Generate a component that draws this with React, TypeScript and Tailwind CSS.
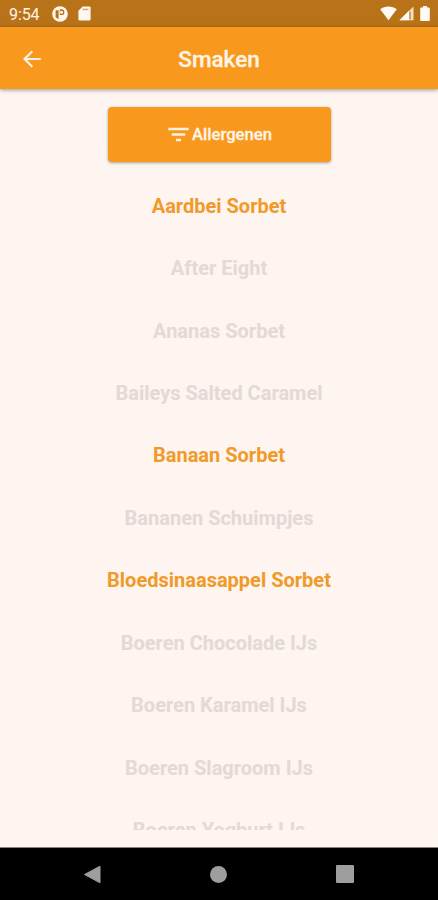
const flavours: { name: string; available: boolean }[] = [
  { name: 'Aardbei Sorbet', available: true },
  { name: 'After Eight', available: false },
  { name: 'Ananas Sorbet', available: false },
  { name: 'Baileys Salted Caramel', available: false },
  { name: 'Banaan Sorbet', available: true },
  { name: 'Bananen Schuimpjes', available: false },
  { name: 'Bloedsinaasappel Sorbet', available: true },
  { name: 'Boeren Chocolade IJs', available: false },
  { name: 'Boeren Karamel IJs', available: false },
  { name: 'Boeren Slagroom IJs', available: false },
  { name: 'Boeren Yoghurt IJs', available: false },
];

function StatusBar() {
  return (
    <div className="flex h-[27px] shrink-0 items-center bg-[#b87319] pl-[9px] pr-[8px] text-white">
      <span className="w-[31px] whitespace-nowrap pt-[2px] text-[16px] leading-[25px] tracking-[-0.1px] text-[#fff3e6]">9:54</span>
      <svg className="ml-[12px] h-4 w-4" viewBox="0 0 16 16">
        <circle cx="8" cy="8" r="7.8" fill="#fff8f0" />
        <path d="M3.600 4.200h3v8.900a5.500 5.500 0 0 1-3-2.200zM7.800 3.300h1.700a2.900 2.900 0 0 1 0 5.800H7.800z" fill="#b87319" />
        <circle cx="9.500" cy="6.200" r="1.500" fill="#fff8f0" />
      </svg>
      <svg className="ml-[10px] h-[15px] w-[13px]" viewBox="0 0 13 15">
        <path d="M4.700.5h6.600A1.300 1.300 0 0 1 12.600 1.800v11.400a1.300 1.300 0 0 1-1.300 1.300H1.700A1.300 1.300 0 0 1 .4 13.200V4.800z" fill="#fff8f0" />
        <path d="M4.500 3.400h6" stroke="#b87319" strokeOpacity="0.6" strokeWidth="1.500" />
      </svg>
      <svg className="ml-auto h-[15px] w-[17px]" viewBox="0 0 17 15">
        <path d="M.2 3.200C5-.5 12-.5 16.800 3.200L8.500 14.200z" fill="#fffaf4" />
      </svg>
      <svg className="ml-[2px] h-[15px] w-[15px]" viewBox="0 0 15 15">
        <path d="M14.500.5v13.700H.5z" fill="#f5dfc5" />
        <path d="M10 4.700v9.500H.5z" fill="#fffaf4" />
        <path d="M11 5.500v7.700" stroke="#b87319" strokeWidth="1.200" />
      </svg>
      <svg className="ml-[6px] h-[15px] w-[10px]" viewBox="0 0 10 15">
        <path d="M3 0h4v1.500h1.800a1 1 0 0 1 1 1V14a1 1 0 0 1-1 1H1.200a1 1 0 0 1-1-1V2.500a1 1 0 0 1 1-1H3z" fill="#fffaf4" />
      </svg>
    </div>
  );
}

function AppBar() {
  return (
    <header className="z-10 grid h-[62px] shrink-0 grid-cols-[64px_1fr_64px] items-center bg-[#f8991d] shadow-[0_1px_4px_rgba(0,0,0,0.4)]">
      <button aria-label="Terug" className="flex h-full items-center pl-[23px] pt-px">
        <svg className="h-[18px] w-[18px]" viewBox="0 0 18 18" fill="none" stroke="#fff0df" strokeWidth="2.200">
          <path d="M17.700 9H2M9.300 1.200 1.500 9l7.800 7.800" />
        </svg>
      </button>
      <h1 className="pt-[2px] text-center text-[22.500px] font-medium leading-7 text-[#fff3e6] [-webkit-text-stroke:0.3px_#fff3e6]">Smaken</h1>
    </header>
  );
}

function NavigationBar() {
  return (
    <nav className="flex h-[53px] shrink-0 items-center border-t border-[#85817e] bg-black pl-[83px] pr-[84px]">
      <div className="flex w-full items-center justify-between">
        <svg className="h-[19px] w-[18px]" viewBox="0 0 18 19">
          <path d="M17 1.200v16.600L1.500 9.500z" fill="#9e9e9e" stroke="#9e9e9e" strokeWidth="1" strokeLinejoin="round" />
        </svg>
        <span className="h-[17px] w-[17px] rounded-full bg-[#9e9e9e]" />
        <span className="h-[18px] w-[18px] rounded-[1px] bg-[#9e9e9e]" />
      </div>
    </nav>
  );
}

export default function App() {
  return (
    <div className="flex h-[900px] w-[438px] flex-col overflow-hidden bg-[#fef4f0] font-['Roboto',sans-serif]">
      <StatusBar />
      <AppBar />
      <main className="flex min-h-0 flex-1 flex-col items-center pb-[17px] pt-[18px]">
        <button className="flex h-[55px] w-[223px] shrink-0 items-center justify-center rounded-[4px] bg-[#f8991d] pl-[2px] shadow-[0_1px_3px_rgba(0,0,0,0.35)]">
          <svg className="h-[15px] w-[21px]" viewBox="0 0 21 15" stroke="#fff0df" strokeWidth="2.400">
            <path d="M.3 2h20.400M3.800 7.500h13.400M8 13h5" />
          </svg>
          <span className="ml-[3px] text-[16.700px] font-medium leading-5 text-[#fff3e6] [-webkit-text-stroke:0.3px_#fff3e6]">Allergenen</span>
        </button>
        <ul className="mt-[12.500px] flex min-h-0 w-full flex-1 flex-col overflow-hidden">
          {flavours.map(({ name, available }) => (
            <li
              key={name}
              className={`flex h-[62.450px] shrink-0 items-center justify-center whitespace-nowrap text-[20px] font-bold ${available ? 'text-[#f09a29]' : 'text-[#e3d9d6]'}`}
            >
              {name}
            </li>
          ))}
        </ul>
      </main>
      <NavigationBar />
    </div>
  );
}
